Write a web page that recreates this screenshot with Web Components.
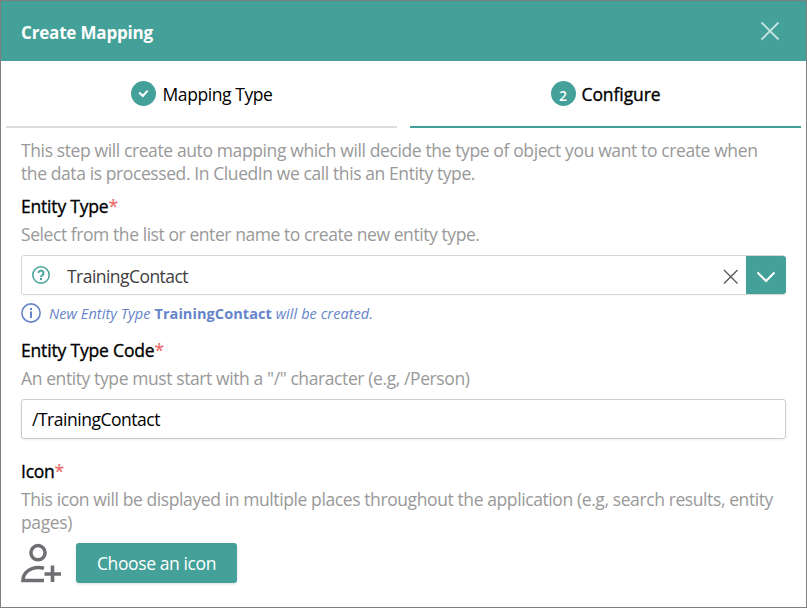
<!DOCTYPE html>
<html lang="en"><head><meta charset="utf-8"><title>Create Mapping</title>
<style>
html,body{margin:0;height:100%;overflow:hidden}
body{font-family:"Open Sans","Noto Sans",sans-serif;font-size:17.5px;color:#000;background:#fff;--teal:#44a199}
</style></head><body>
<mapping-dialog></mapping-dialog>
<script>
const define=(name,html,after)=>customElements.define(name,class extends HTMLElement{
  constructor(){super();this.attachShadow({mode:'open'}).innerHTML=html}
  connectedCallback(){if(after)after(this)}
});

/* One line of text whose tracking is tuned to a given measure. */
define('text-line','<style>:host{display:block;white-space:nowrap;line-height:23px}span{display:inline-block}</style><span><slot></slot></span>',el=>{
  const s=el.shadowRoot.querySelector('span'),w=+el.getAttribute('measure');
  const n=el.textContent.length;
  if(w)s.style.letterSpacing=((w-s.getBoundingClientRect().width)/n)+'px';
});

define('dialog-header',`<style>
:host{display:flex;align-items:center;justify-content:space-between;height:60px;padding:3px 26px 0 20px;box-sizing:border-box;background:var(--teal);color:#fff;font-weight:700;font-size:17px}
svg{display:block;margin-top:-3px}</style><slot></slot>
<svg width="20" height="20" viewBox="0 0 20 20" fill="none" stroke="#c4e3e0" stroke-width="1.8"><path d="M1.5 1.5 18.5 18.5M18.5 1.5 1.5 18.5"/></svg>`);

define('step-tab',`<style>
:host{display:flex;flex:1;justify-content:center;gap:7px;height:67px;box-sizing:border-box;padding-top:20px;border-bottom:2px solid #ddd}
:host([active]){border-color:var(--teal);-webkit-text-stroke:.35px #000;gap:6px}
.dot{width:25px;height:25px;border-radius:50%;background:var(--teal);color:#fff;display:grid;place-items:center;font:600 14px/25px "Open Sans",sans-serif;-webkit-text-stroke:0}
.label{padding-top:2px}</style><span class="dot"><slot name="mark"></slot></span><span class="label"><slot></slot></span>`);

define('field-label',`<style>:host{display:flex;line-height:23px;-webkit-text-stroke:.35px #000}
.star{color:#ee6a6a;-webkit-text-stroke:.2px #ee6a6a;line-height:23px}</style><slot></slot><span class="star">*</span>`);

define('hint-text','<style>:host{display:block;color:#999}</style><slot></slot>');

define('type-picker',`<style>
:host{display:flex;height:40px;box-sizing:border-box;border:1px solid #d3d9d7;border-radius:3px;align-items:center;padding-left:10px;color:#404040;box-shadow:0 1px 2px #00000008}
.value{margin:2px auto 0 16px}
.drop{align-self:stretch;width:40px;background:var(--teal);border-radius:0 3px 3px 0;display:grid;place-items:center;margin-left:8px;margin-right:-1px}
svg{display:block;flex:none}</style>
<svg width="19" height="19" viewBox="0 0 19 19" fill="none" stroke="#44a199" stroke-width="1.5"><circle cx="9" cy="9" r="8.2"/><path d="M6.5 7.1a2.5 2.5 0 1 1 4.1 1.9q-1.6 1-1.6 2" stroke-width="1.9"/><path d="M9 12v2" stroke-width="2"/></svg>
<span class="value"><slot></slot></span>
<svg width="15" height="15" viewBox="0 0 15 15" stroke="#555" stroke-width="1.3" style="margin-top:3px"><path d="M1 1 14.5 14.5M14.5 1 1 14.5"/></svg>
<span class="drop"><svg width="20" height="12" viewBox="0 0 20 12" fill="none" stroke="#fff" stroke-width="2" style="margin-top:3px"><path d="M1.5 1.5 10 10 18.5 1.5"/></svg></span>`);

define('info-note',`<style>:host{display:flex;gap:8px;align-items:center;height:20px;color:#6684c9;font-size:14.5px;font-style:italic}
svg{display:block;flex:none}</style>
<svg width="20" height="20" viewBox="0 0 20 20" fill="none" stroke="#6684c9"><circle cx="10" cy="10" r="9.1" stroke-width="1.6"/><path d="M10 8.6V15M10 5v2" stroke-width="2"/></svg><slot></slot>`);

define('text-box',`<style>:host{display:flex;align-items:center;height:40px;box-sizing:border-box;border:1px solid #ccc;border-radius:3px;padding:1px 10px 0;box-shadow:0 1px 3px #00000012}</style><slot></slot>`);

define('icon-chooser',`<style>:host{display:flex;gap:14px}
svg{display:block}
button{all:unset;box-sizing:border-box;width:161px;height:40px;padding:1px 0 0 21px;background:var(--teal);border-radius:3px;color:#fff;display:flex;align-items:center;box-shadow:0 1px 3px #0002}</style>
<svg width="41" height="40" viewBox="0 0 41 40" fill="none" stroke="#6f6e73" stroke-width="3.5"><circle cx="17" cy="9.7" r="7.1"/><path d="M23 25.2Q17 23.4 11 25.6 1.9 29 1.9 37.5H23"/><path d="M31.5 22.5V39M23.5 31H40" stroke-width="3.6"/></svg>
<button><slot></slot></button>`);

define('mapping-dialog',`<style>
:host{display:block;height:100vh;box-sizing:border-box;border:1px solid #7f7f7f;background:#fff}
nav{display:flex;gap:13px;padding:0 5px}
main{display:block;padding:11px 20px 0}
.first{margin-top:10px}.hint{margin-top:5px}
</style>
<dialog-header><text-line measure="132">Create Mapping</text-line></dialog-header>
<nav><step-tab><svg slot="mark" width="11" height="9" viewBox="0 0 11 9" fill="none" stroke="#fff" stroke-width="2"><path d="M1.2 3.5 4.8 7 9.7 1.6"/></svg><text-line measure="110">Mapping Type</text-line></step-tab>
<step-tab active><span slot="mark" style="padding-top:2px">2</span><text-line measure="79">Configure</text-line></step-tab></nav>
<main>
<hint-text><text-line measure="736.5">This step will create auto mapping which will decide the type of object you want to create when</text-line><text-line measure="454">the data is processed. In CluedIn we call this an Entity type.</text-line></hint-text>
<field-label class="first"><text-line measure="87.5">Entity Type</text-line></field-label>
<hint-text class="hint"><text-line measure="458.5">Select from the list or enter name to create new entity type.</text-line></hint-text>
<type-picker style="margin-top:9px"><text-line measure="121">TrainingContact</text-line></type-picker>
<info-note style="margin-top:8px"><text-line measure="324">New Entity Type <b style="font-style:normal">TrainingContact</b> will be created.</text-line></info-note>
<field-label style="margin-top:16px"><text-line measure="133.5">Entity Type Code</text-line></field-label>
<hint-text class="hint"><text-line measure="448.5">An entity type must start with a "/" character (e.g, /Person)</text-line></hint-text>
<text-box style="margin-top:9px"><text-line measure="128">/TrainingContact</text-line></text-box>
<field-label style="margin-top:21px"><text-line measure="33.5">Icon</text-line></field-label>
<hint-text class="hint"><text-line measure="752">This icon will be displayed in multiple places throughout the application (e.g, search results, entity</text-line><text-line measure="51">pages)</text-line></hint-text>
<icon-chooser style="margin-top:9px"><text-line measure="119">Choose an icon</text-line></icon-chooser>
</main>`);
</script></body></html>
